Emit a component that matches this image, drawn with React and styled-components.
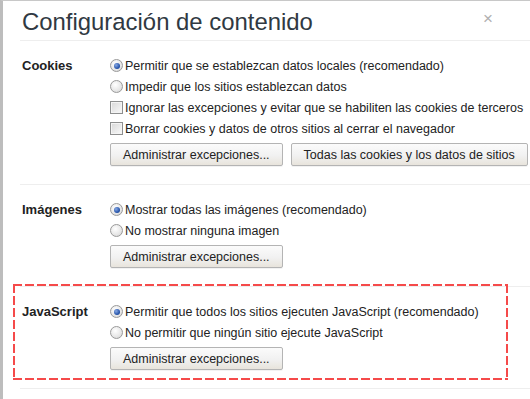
import React from "react";
import styled, { createGlobalStyle } from "styled-components";

const GlobalStyle = createGlobalStyle`
  html, body {
    margin: 0;
    padding: 0;
    background: #fff;
  }
  body {
    font-family: "Liberation Sans", Arial, sans-serif;
    font-size: 12.5px;
    color: #222;
  }
`;

const sections = [
  {
    title: "Cookies",
    options: [
      { type: "radio", checked: true, label: "Permitir que se establezcan datos locales (recomendado)" },
      { type: "radio", label: "Impedir que los sitios establezcan datos" },
      { type: "checkbox", label: "Ignorar las excepciones y evitar que se habiliten las cookies de terceros" },
      { type: "checkbox", label: "Borrar cookies y datos de otros sitios al cerrar el navegador" },
    ],
    buttons: ["Administrar excepciones...", "Todas las cookies y los datos de sitios"],
  },
  {
    title: "Imágenes",
    options: [
      { type: "radio", checked: true, label: "Mostrar todas las imágenes (recomendado)" },
      { type: "radio", label: "No mostrar ninguna imagen" },
    ],
    buttons: ["Administrar excepciones..."],
  },
  {
    title: "JavaScript",
    highlight: true,
    options: [
      { type: "radio", checked: true, label: "Permitir que todos los sitios ejecuten JavaScript (recomendado)" },
      { type: "radio", label: "No permitir que ningún sitio ejecute JavaScript" },
    ],
    buttons: ["Administrar excepciones..."],
  },
];

const App = () => {
  return (
    <>
      <GlobalStyle />
      <Dialog>
        <Header>
          <Title>Configuración de contenido</Title>
          <Close>×</Close>
        </Header>
        {sections.map((s) => (
          <Section key={s.title} highlight={s.highlight}>
            <Label>{s.title}</Label>
            <Controls>
              {s.options.map((o) => (
                <Row key={o.label}>
                  {o.type === "radio" ? (
                    <Radio checked={o.checked} />
                  ) : (
                    <Checkbox />
                  )}
                  <span>{o.label}</span>
                </Row>
              ))}
              <Buttons>
                {s.buttons.map((b) => (
                  <Button key={b}>{b}</Button>
                ))}
              </Buttons>
            </Controls>
          </Section>
        ))}
        <Footer />
      </Dialog>
    </>
  );
};

const Dialog = styled.div`
  height: 398px;
  border-left: 3px solid #bdbdbd;
  border-top: 1px solid #c8c8c8;
  overflow: hidden;
`;

const Header = styled.div`
  height: 39px;
  padding-left: 19px;
  display: flex;
  align-items: center;
  justify-content: space-between;
`;

const Title = styled.h1`
  margin: 0;
  font-family: "Liberation Sans", Arial, sans-serif;
  font-weight: normal;
  font-size: 23.9px;
  color: #303942;
  line-height: 1;
  margin-top: 2px;
`;

const Close = styled.span`
  font-size: 17px;
  color: #b0b0b0;
  margin-right: 37px;
  margin-top: -4px;
`;

const dashH = "repeating-linear-gradient(90deg, #f54a4a 0 9px, transparent 9px 12px)";
const dashV = "repeating-linear-gradient(180deg, #f54a4a 0 9px, transparent 9px 12px)";

const Section = styled.div`
  position: relative;
  margin-left: 17px;
  border-top: 1px solid #eeeeee;
  padding: 14px 0 18px 2px;
  display: flex;

  ${(p) =>
    p.highlight &&
    `
    &::after {
      content: "";
      position: absolute;
      left: -7px;
      top: -3px;
      right: 22px;
      bottom: 8px;
      background:
        ${dashH} left top / 100% 2px no-repeat,
        ${dashH} left bottom / 100% 2px no-repeat,
        ${dashV} left top / 2px 100% no-repeat,
        ${dashV} right top / 2px 100% no-repeat;
    }
  `}
`;

const Label = styled.div`
  width: 88px;
  flex-shrink: 0;
  font-size: 13px;
  font-weight: bold;
  line-height: 21px;
  color: #222;
`;

const Controls = styled.div`
  display: flex;
  flex-direction: column;
`;

const Row = styled.div`
  display: flex;
  align-items: center;
  height: 21px;
  white-space: nowrap;
  color: #222;
`;

const Radio = styled.span`
  width: 11px;
  height: 11px;
  border-radius: 50%;
  border: 1px solid #9a9a9a;
  background: radial-gradient(circle at 40% 35%, #ffffff 0%, #e6e6e6 60%, #cfcfcf 100%);
  margin-right: 2px;
  flex-shrink: 0;
  position: relative;
  box-sizing: content-box;

  ${(p) =>
    p.checked &&
    `
    &::after {
      content: "";
      position: absolute;
      left: 2.5px;
      top: 2.5px;
      width: 6px;
      height: 6px;
      border-radius: 50%;
      background: radial-gradient(circle at 35% 35%, #86a8e4 0%, #2452a8 65%, #173d85 100%);
    }
  `}
`;

const Checkbox = styled.span`
  width: 11px;
  height: 11px;
  border: 1px solid #8e8f8f;
  background: linear-gradient(135deg, #d8d8d8 0%, #ececec 60%, #fafafa 100%);
  box-shadow: inset 0 0 0 1px #f4f4f4;
  margin-right: 2px;
  flex-shrink: 0;
`;

const Buttons = styled.div`
  display: flex;
  gap: 8px;
  margin-top: 4px;
`;

const Button = styled.button`
  height: 23px;
  padding: 0 12px;
  font-family: "Liberation Sans", Arial, sans-serif;
  font-size: 12.5px;
  color: #222;
  border: 1px solid #b4b4b4;
  border-radius: 2px;
  background: linear-gradient(#fbfbfb 0%, #f1f1f1 55%, #e8e4dc 100%);
  box-shadow: 0 1px 0 rgba(0, 0, 0, 0.05);
  white-space: nowrap;
  cursor: pointer;
`;

const Footer = styled.div`
  margin-left: 17px;
  border-top: 1px solid #eeeeee;
`;

export default App;
